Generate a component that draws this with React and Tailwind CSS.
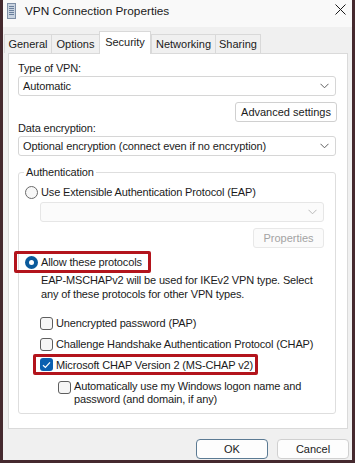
import React from "react";

const F = { fontFamily: '"Liberation Sans", Arial, sans-serif' };

function Chevron({ color = "#5f5f5f" }) {
  return (
    <svg width="9" height="6" viewBox="0 0 9 6" className="shrink-0">
      <path d="M0.5 0.8 L4.5 4.8 L8.5 0.8" fill="none" stroke={color} strokeWidth="1" />
    </svg>
  );
}

function Select({ text, disabled }) {
  return (
    <div
      className={`h-[20px] flex items-center justify-between pl-[4px] pr-[6px] rounded-[3px] border ${
        disabled ? "border-[#e6e6e6] bg-[#fbfbfb]" : "border-[#d6d6d6] bg-white"
      }`}
    >
      <span className="text-[11px] leading-[16px] tracking-[-0.1px] text-[#1b1b1b] whitespace-nowrap">{text}</span>
      <Chevron color={disabled ? "#b8b8b8" : "#5f5f5f"} />
    </div>
  );
}

function Radio({ checked }) {
  return checked ? (
    <span className="w-[13px] h-[13px] rounded-full bg-[#0a5a9c] flex items-center justify-center shrink-0">
      <span className="w-[5px] h-[5px] rounded-full bg-white" />
    </span>
  ) : (
    <span className="w-[13px] h-[13px] rounded-full border border-[#6a6a6a] bg-[#f7f7f7] shrink-0" />
  );
}

function Check({ checked, className = "" }) {
  return checked ? (
    <span className={`w-[13px] h-[13px] rounded-[3px] bg-[#0a5fb0] flex items-center justify-center shrink-0 ${className}`}>
      <svg width="9" height="8" viewBox="0 0 9 8">
        <path d="M1 4.2 L3.4 6.5 L8 1.3" fill="none" stroke="white" strokeWidth="1.2" />
      </svg>
    </span>
  ) : (
    <span className={`block w-[13px] h-[13px] rounded-[3px] border border-[#5e5e5e] bg-[#f6f6f6] shrink-0 ${className}`} />
  );
}

const T = "text-[11px] leading-[16px] tracking-[-0.15px] whitespace-nowrap";

export default function App() {
  const tabs = [
    { t: "General", w: 47 },
    { t: "Options", w: 48 },
    { t: "Security", w: 52, sel: true },
    { t: "Networking", w: 64 },
    { t: "Sharing", w: 46 },
  ];
  return (
    <div className="w-[355px] h-[463px] bg-[#45292e] px-[3px] pb-[3px]" style={F}>
      <div className="h-full bg-[#f0f0f0] flex flex-col text-[#1b1b1b]">
        {/* title bar */}
        <div className="h-[27px] shrink-0 bg-[#f9f9f9] flex items-center">
          <svg width="9" height="16" viewBox="0 0 9 16" className="ml-[4px] mt-[-6px]">
            <rect x="0.5" y="0.5" width="8" height="15" fill="#c9d3e0" stroke="#7f8fa6" />
            <rect x="2" y="3" width="5" height="1" fill="#6a7f9c" />
            <rect x="2" y="5" width="5" height="1" fill="#6a7f9c" />
            <rect x="2" y="7" width="5" height="1" fill="#6a7f9c" />
            <rect x="2" y="9" width="5" height="1" fill="#6a7f9c" />
            <rect x="2" y="11" width="5" height="1" fill="#6a7f9c" />
          </svg>
          <span className="ml-[9px] mt-[-6px] text-[11.8px] leading-[18px] text-[#1a1a1a]">
            VPN Connection Properties
          </span>
          <svg width="11" height="11" viewBox="0 0 11 11" className="ml-auto mr-[6px] mt-[-9px]">
            <path d="M0.5 0.5 L10.5 10.5 M10.5 0.5 L0.5 10.5" stroke="#1a1a1a" strokeWidth="1" />
          </svg>
        </div>

        {/* tabs */}
        <div className="flex items-end pl-[1px] h-[25px] mt-[1px] relative z-10">
          {tabs.map((tb) =>
            tb.sel ? (
              <div
                key={tb.t}
                style={{ width: tb.w }}
                className="h-[23px] mb-[-1px] bg-white border border-b-0 border-[#d9d9d9] flex items-center justify-center text-[11px] leading-[16px] pb-[2px]"
              >
                {tb.t}
              </div>
            ) : (
              <div
                key={tb.t}
                style={{ width: tb.w }}
                className="h-[19px] bg-[#f0f0f0] border border-b-0 border-r-0 last:border-r border-[#d9d9d9] flex items-center justify-center text-[11px] leading-[16px]"
              >
                {tb.t}
              </div>
            )
          )}
        </div>

        {/* panel */}
        <div className="ml-[5px] mr-[4px] bg-white border border-[#dadada] flex flex-col pb-[14px]">
          <div className="pl-[9px] pr-[11px] flex flex-col">
            <div className={`mt-[6px] ${T}`}>Type of VPN:</div>
            <Select text="Automatic" />
            <div className="mt-[6px] flex justify-end">
              <div className="h-[20px] w-[102px] rounded-[3px] border border-[#d0d0d0] bg-white flex items-center justify-center text-[11px] leading-[16px] mr-[-1px]">
                Advanced settings
              </div>
            </div>
            <div className={`mt-[-2px] ${T}`}>Data encryption:</div>
            <Select text="Optional encryption (connect even if no encryption)" />

            <fieldset className="mt-[8px] border border-[#dedede] rounded-[3px] pb-[7px] min-w-0">
              <legend className={`ml-[5px] px-[2px] ${T}`}>Authentication</legend>
              <div className="mt-[4px] ml-[6px] flex items-center gap-[3px] h-[16px]">
                <Radio />
                <span className={T}>Use Extensible Authentication Protocol (EAP)</span>
              </div>
              <div className="mt-[2px] ml-[21px] mr-[11px]">
                <Select text="" disabled />
              </div>
              <div className="mt-[6px] mr-[11px] flex justify-end">
                <div className="h-[20px] w-[71px] rounded-[3px] border border-[#e8e8e8] bg-[#fbfbfb] flex items-center justify-center text-[11px] leading-[16px] text-[#a3a3a3]">
                  Properties
                </div>
              </div>
              <div className="mt-[3px] ml-[-5px] flex">
                <div className="border-[3px] border-[#b3141c] rounded-[2px] h-[22px] w-[137px] pl-[8px] flex items-center gap-[3px]">
                  <Radio checked />
                  <span className={T}>Allow these protocols</span>
                </div>
              </div>
              <div className="ml-[22px] text-[11px] leading-[14px] tracking-[-0.15px] whitespace-nowrap">
                EAP-MSCHAPv2 will be used for IKEv2 VPN type. Select
                <br />
                any of these protocols for other VPN types.
              </div>
              <div className="mt-[14px] ml-[21px] flex items-center gap-[3px] h-[16px]">
                <Check />
                <span className={T}>Unencrypted password (PAP)</span>
              </div>
              <div className="mt-[5px] ml-[21px] flex items-center gap-[3px] h-[16px]">
                <Check />
                <span className={T}>Challenge Handshake Authentication Protocol (CHAP)</span>
              </div>
              <div className="mt-[2px] ml-[14px] flex">
                <div className="border-[3px] border-[#b3141c] rounded-[2px] h-[21px] w-[225px] pl-[4px] flex items-center gap-[3px]">
                  <Check checked />
                  <span className={T}>Microsoft CHAP Version 2 (MS-CHAP v2)</span>
                </div>
              </div>
              <div className="mt-[5px] ml-[39px] flex items-start gap-[3px]">
                <Check className="mt-[1px]" />
                <span className="text-[11px] leading-[13px] tracking-[-0.15px] whitespace-nowrap">
                  Automatically use my Windows logon name and
                  <br />
                  password (and domain, if any)
                </span>
              </div>
            </fieldset>
          </div>
        </div>

        {/* buttons */}
        <div className="mt-[10px] flex justify-end gap-[9px] pr-[3px]">
          <div className="h-[20px] w-[72px] rounded-[4px] border border-[#5b7a93] bg-[#fdfdfd] flex items-center justify-center text-[11px] leading-[16px]">
            OK
          </div>
          <div className="h-[20px] w-[72px] rounded-[4px] border border-[#d0d0d0] bg-[#fdfdfd] flex items-center justify-center text-[11px] leading-[16px]">
            Cancel
          </div>
        </div>
      </div>
    </div>
  );
}
